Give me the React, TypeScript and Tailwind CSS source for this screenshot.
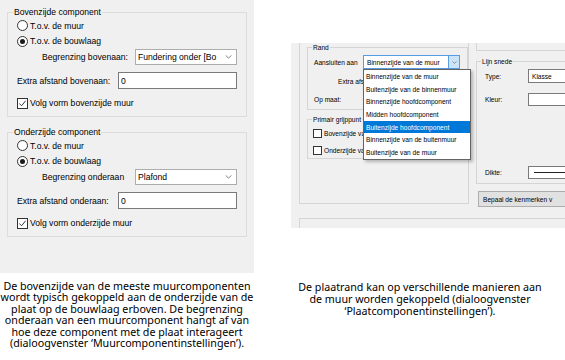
import React from 'react';

function Chevron({ className = '' }: { className?: string }) {
  return (
    <svg viewBox="0 0 8 5" className={className} fill="none" stroke="#606060" strokeWidth="1">
      <polyline points="0.5,0.5 4,4 7.5,0.5" />
    </svg>
  );
}

function Radio({ label, checked = false, className = '' }: { label: string; checked?: boolean; className?: string }) {
  return (
    <div className={`flex items-center gap-[2px] ${className}`}>
      <span className="w-[11px] h-[11px] rounded-full border border-[#333] bg-white flex items-center justify-center">
        {checked && <span className="w-[5px] h-[5px] rounded-full bg-[#1a1a1a]" />}
      </span>
      <span>{label}</span>
    </div>
  );
}

function CheckBox({ checked = false, size = 'w-[11px] h-[11px]' }: { checked?: boolean; size?: string }) {
  return (
    <span className={`${size} border border-[#333] bg-white flex items-center justify-center shrink-0`}>
      {checked && (
        <svg viewBox="0 0 10 10" className="w-[9px] h-[9px]" fill="none" stroke="#222" strokeWidth="1">
          <polyline points="1.5,5 4,7.5 8.5,2" />
        </svg>
      )}
    </span>
  );
}

interface WallGroupProps {
  title: string;
  limitLabel: string;
  limitValue: string;
  extraLabel: string;
  follow: string;
  className?: string;
}

function WallGroup({ title, limitLabel, limitValue, extraLabel, follow, className = '' }: WallGroupProps) {
  return (
    <fieldset className={`w-[240px] border border-[#dcdcdc] ${className}`}>
      <legend className="ml-[5px] px-[1px] h-[12px]">{title}</legend>
      <div className="pl-[9px] pb-[5px]">
        <Radio label="T.o.v. de muur" className="h-[15px]" />
        <Radio checked label="T.o.v. de bouwlaag" className="h-[16px]" />
        <div className="flex items-center h-[16px]">
          <span className="ml-[25px] w-[93px] whitespace-nowrap">{limitLabel}</span>
          <div className="w-[102px] h-full bg-white border border-[#adadad] flex items-center pl-[2px] pr-[4px]">
            <span className="flex-1 whitespace-nowrap overflow-hidden">{limitValue}</span>
            <Chevron className="w-[7px] h-[4px]" />
          </div>
        </div>
        <div className="mt-[7px] flex items-center h-[17px]">
          <span className="w-[101px] whitespace-nowrap">{extraLabel}</span>
          <div className="w-[119px] h-full bg-white border border-[#7a7a7a] pl-[2px] flex items-center">0</div>
        </div>
        <div className="mt-[6px] h-[16px] flex items-center gap-[2px]">
          <CheckBox checked />
          <span>{follow}</span>
        </div>
      </div>
    </fieldset>
  );
}

const listItems = [
  'Binnenzijde van de muur',
  'Buitenzijde van de binnenmuur',
  'Binnenzijde hoofdcomponent',
  'Midden hoofdcomponent',
  'Buitenzijde hoofdcomponent',
  'Binnenzijde van de buitenmuur',
  'Buitenzijde van de muur',
];

function SlabDialog() {
  return (
    <div className="w-[274px] h-[185px] bg-[#f0f0f0] overflow-hidden text-[6.6px] leading-[9px] text-black font-['Liberation_Sans',Arial,sans-serif]">
      <div className="flex h-[165px]">
        {/* Left panel */}
        <div className="ml-[8px] w-[177px] h-[161px] border-l border-r border-b border-[#d5d5d5]">
          <fieldset className="ml-[7px] w-[161px] border border-[#d5d5d5]">
            <legend className="ml-[4px] px-[1px] h-[9px]">Rand</legend>
            <div className="pl-[6px] pb-[4px]">
              <div className="mt-[3px] h-[14px] flex items-center">
                <span className="w-[49px] whitespace-nowrap">Aansluiten aan</span>
                <div className="relative w-[97px] h-full bg-white border border-[#569de5] flex items-center">
                  <span className="flex-1 pl-[3px] whitespace-nowrap overflow-hidden">Binnenzijde van de muur</span>
                  <span className="w-[11px] h-full bg-[#cce4f7] border-l border-[#569de5] flex items-center justify-center">
                    <Chevron className="w-[5px] h-[3px]" />
                  </span>
                  <div className="absolute left-[-1px] top-[13px] w-[108px] h-[91px] bg-white border border-[#646464] shadow-[2px_2px_3px_rgba(0,0,0,0.25)] z-10">
                    {listItems.map((item, i) => (
                      <div
                        key={item}
                        className={`h-[12.7px] pl-[2px] flex items-center whitespace-nowrap ${
                          i === 4 ? 'bg-[#0078d7] text-white' : ''
                        }`}
                      >
                        {item}
                      </div>
                    ))}
                  </div>
                </div>
              </div>
              <div className="mt-[6px] h-[12px] flex items-center">
                <span className="ml-[24px] whitespace-nowrap">Extra afstand:</span>
              </div>
              <div className="mt-[6px] h-[12px] flex items-center">
                <span>Op maat:</span>
              </div>
            </div>
          </fieldset>
          <fieldset className="mt-[5px] ml-[7px] w-[161px] border border-[#d5d5d5]">
            <legend className="ml-[4px] px-[1px] h-[9px]">Primair grijppunt</legend>
            <div className="pl-[5px] pb-[2px]">
              <div className="mt-[3px] h-[12px] flex items-center gap-[2px]">
                <CheckBox size="w-[9px] h-[9px]" />
                <span className="whitespace-nowrap">Bovenzijde van de plaat</span>
              </div>
              <div className="mt-[5px] h-[12px] flex items-center gap-[2px]">
                <CheckBox size="w-[9px] h-[9px]" />
                <span className="whitespace-nowrap">Onderzijde van de plaat</span>
              </div>
            </div>
          </fieldset>
        </div>

        {/* Right panel */}
        <div className="ml-[7px] w-[100px] shrink-0">
          <div className="h-[8px] border-l border-b border-[#d5d5d5]" />
          <fieldset className="mt-[6px] w-[100px] border border-[#d5d5d5]">
            <legend className="ml-[4px] px-[1px] h-[9px]">Lijn snede</legend>
            <div className="pl-[8px] pb-[4px]">
              <div className="mt-[3px] h-[14px] flex items-center">
                <span className="w-[43px]">Type:</span>
                <div className="flex-1 h-full bg-white border border-[#7a7a7a] pl-[3px] flex items-center">Klasse</div>
              </div>
              <div className="mt-[10px] h-[13px] flex items-center">
                <span className="w-[43px]">Kleur:</span>
                <div className="flex-1 h-full bg-white border border-[#7a7a7a]" />
              </div>
              <div className="mt-[60px] h-[13px] flex items-center">
                <span className="w-[43px]">Dikte:</span>
                <div className="flex-1 h-full bg-white border border-[#7a7a7a] pl-[5px] flex items-center">
                  <div className="w-full h-px bg-[#222]" />
                </div>
              </div>
            </div>
          </fieldset>
          <div className="mt-[7px] ml-[2px] w-[100px] h-[16px] bg-[#e1e1e1] border border-[#adadad] pl-[4px] flex items-center whitespace-nowrap overflow-hidden">
            Bepaal de kenmerken v
          </div>
        </div>
      </div>
      <div className="mt-[10px] ml-[8px] h-[20px] border-l border-t border-[#d5d5d5]" />
    </div>
  );
}

export default function App() {
  return (
    <div className="w-[565px] h-[360px] bg-white flex overflow-hidden">
      {/* Left: wall component settings */}
      <div className="w-[254px] shrink-0">
        <div className="w-[254px] h-[273px] bg-[#f0f0f0] pt-[6px] pl-[7px] text-[8.6px] leading-[12px] text-black font-['Liberation_Sans',Arial,sans-serif]">
          <WallGroup
            title="Bovenzijde component"
            limitLabel="Begrenzing bovenaan:"
            limitValue="Fundering onder [Bo"
            extraLabel="Extra afstand bovenaan:"
            follow="Volg vorm bovenzijde muur"
          />
          <WallGroup
            className="mt-[9px]"
            title="Onderzijde component"
            limitLabel="Begrenzing onderaan"
            limitValue="Plafond"
            extraLabel="Extra afstand onderaan:"
            follow="Volg vorm onderzijde muur"
          />
        </div>
        <p className="mt-[8px] text-center text-[10.7px] leading-[11.4px] text-black font-['Noto_Sans',sans-serif]">
          <span className="block whitespace-nowrap">De bovenzijde van de meeste muurcomponenten</span>
          <span className="block whitespace-nowrap">wordt typisch gekoppeld aan de onderzijde van de</span>
          <span className="block whitespace-nowrap">plaat op de bouwlaag erboven. De begrenzing</span>
          <span className="block whitespace-nowrap">onderaan van een muurcomponent hangt af van</span>
          <span className="block whitespace-nowrap">hoe deze component met de plaat interageert</span>
          <span className="block whitespace-nowrap">(dialoogvenster ‘Muurcomponentinstellingen’).</span>
        </p>
      </div>

      {/* Right: slab component settings */}
      <div className="ml-[37px] w-[274px] shrink-0 pt-[43px]">
        <SlabDialog />
        <p className="mt-[53px] w-[258px] text-center text-[10.7px] leading-[12px] text-black font-['Noto_Sans',sans-serif]">
          <span className="block whitespace-nowrap">De plaatrand kan op verschillende manieren aan</span>
          <span className="block whitespace-nowrap">de muur worden gekoppeld (dialoogvenster</span>
          <span className="block whitespace-nowrap">‘Plaatcomponentinstellingen’).</span>
        </p>
      </div>
    </div>
  );
}
